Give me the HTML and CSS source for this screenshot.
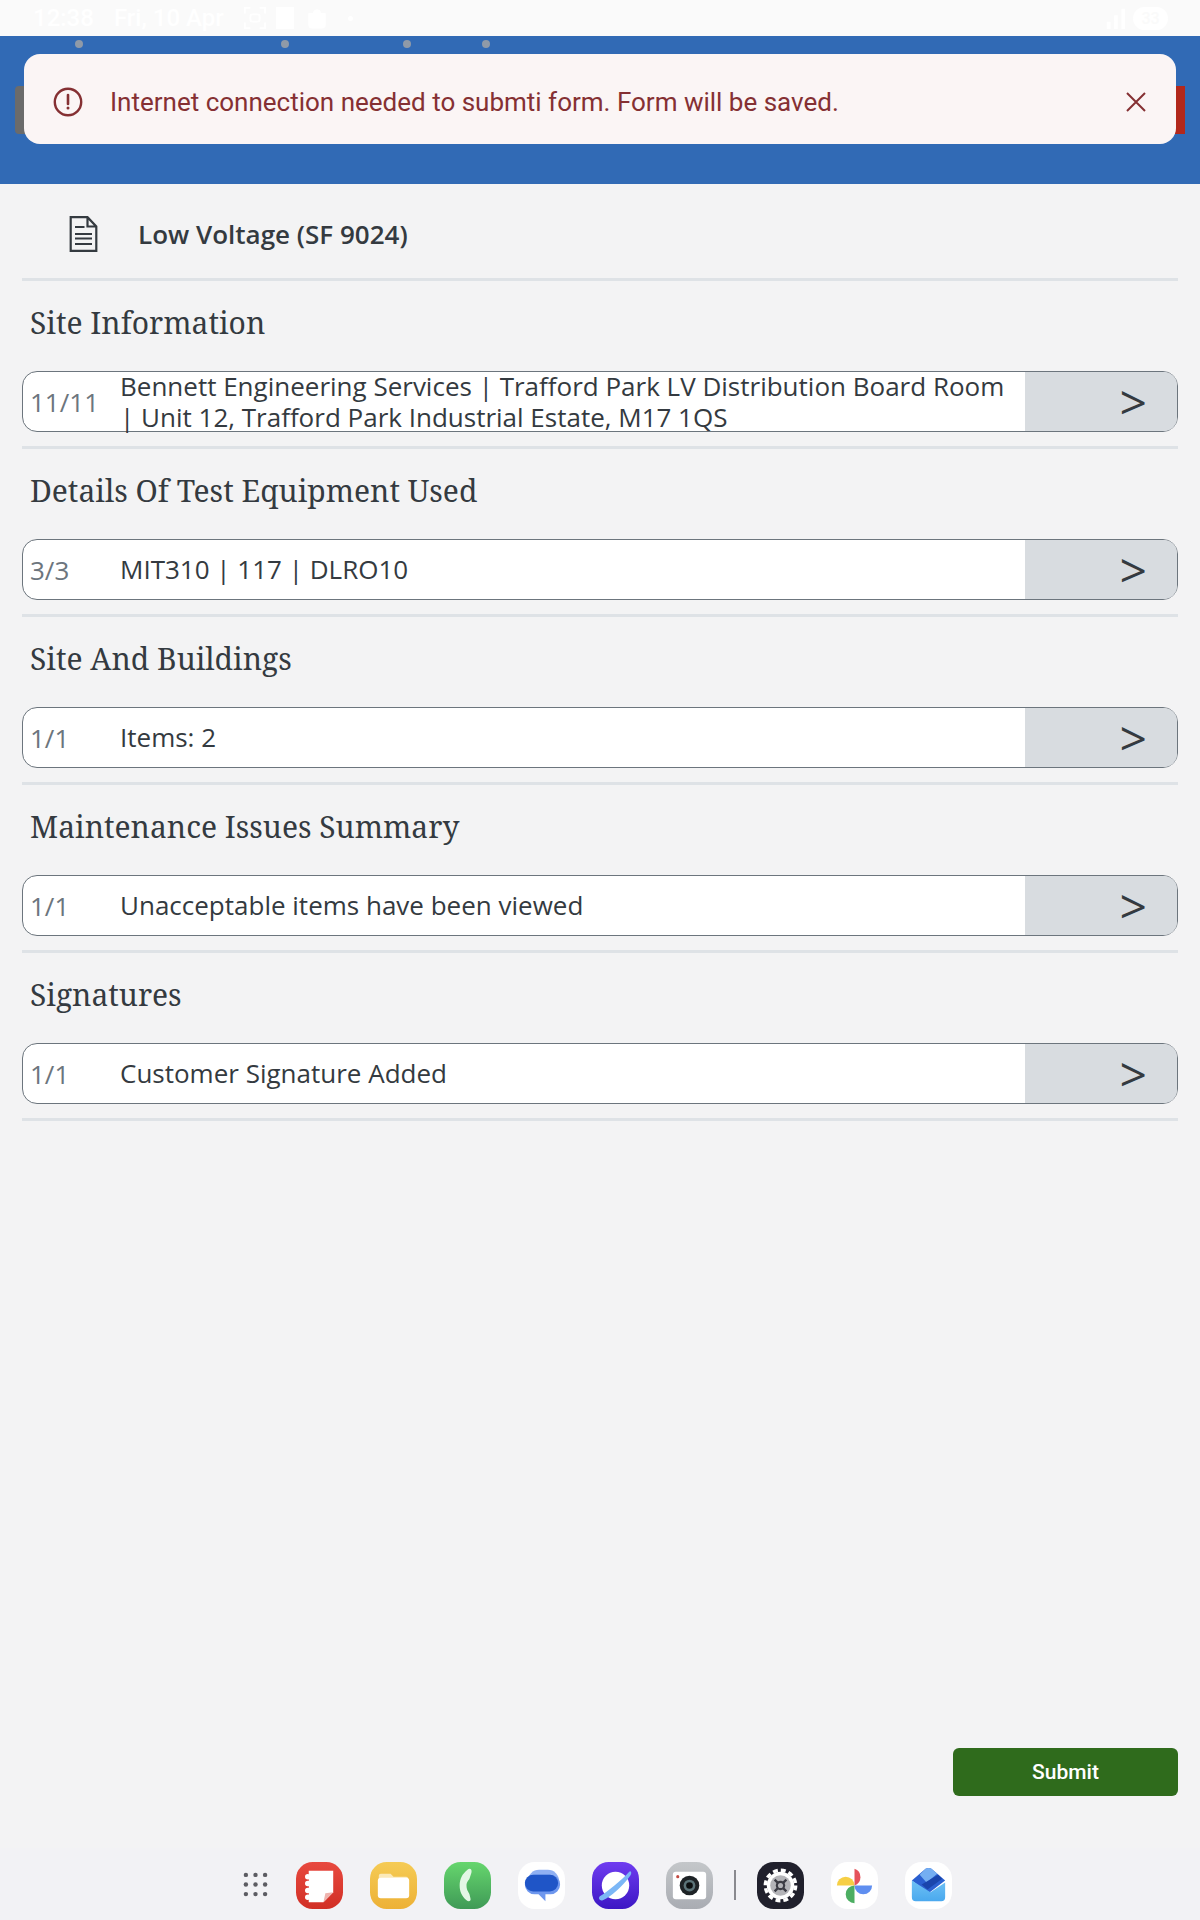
FILE: index.html
```html
<!DOCTYPE html>
<html lang="en">
<head>
<meta charset="utf-8">
<title>Low Voltage (SF 9024)</title>
<link rel="stylesheet" href="styles.css">
</head>
<body>
<div class="status">
  <span class="st-time">12:38</span><span class="st-date">Fri, 10 Apr</span>
  <svg class="st-ico" viewBox="0 0 24 24"><path d="M1 7V1H7M17 1H23V7M23 17V23H17M7 23H1V17" fill="none" stroke="#fff" stroke-width="2"/><rect x="7" y="8" width="10" height="8" rx="2" fill="none" stroke="#fff" stroke-width="2"/></svg>
  <span class="st-box"></span>
  <svg class="st-ico" viewBox="0 0 24 24"><path d="M3 7H21V20A3 3 0 0 1 18 23H6A3 3 0 0 1 3 20Z M8 7A4 4 0 0 1 16 7" fill="#fff" stroke="#fff"/></svg>
  <span class="st-dot"></span>
  <span class="st-spacer"></span>
  <svg class="st-signal" viewBox="0 0 24 24"><path d="M2 24V16H6V24ZM10 24V9H14V24ZM18 24V2H22V24Z" fill="#fff"/></svg>
  <span class="st-batt">33</span>
</div>
<header class="header">
  <span class="pin p1"></span><span class="pin p2"></span><span class="pin p3"></span><span class="pin p4"></span>
  <span class="side left"></span><span class="side right"></span>
  <div class="toast">
    <svg class="toast-ico" viewBox="0 0 30 30"><circle cx="15" cy="15" r="13.2" fill="none" stroke="#853033" stroke-width="2.4"/><path d="M15 8v9" stroke="#853033" stroke-width="2.6" stroke-linecap="round"/><circle cx="15" cy="21" r="1.5" fill="#853033"/></svg>
    <span class="toast-text">Internet connection needed to submti form. Form will be saved.</span>
    <svg class="toast-x" viewBox="0 0 20 20"><path d="M1 1l18 18M19 1L1 19" stroke="#853033" stroke-width="2" fill="none"/></svg>
  </div>
</header>
<main class="main">
  <div class="title">
    <svg class="doc" viewBox="0 0 28 36"><path d="M1.2 1.2H18L26.8 10.5V34.8H1.2Z M18 1.2V10.5H26.8" fill="none" stroke="#343a40" stroke-width="2.2"/><path d="M5.5 11H15M5.5 18H22.5M5.5 22.5H22.5M5.5 28H22.5" stroke="#343a40" stroke-width="2.2"/></svg>
    <span>Low Voltage (SF 9024)</span>
  </div>
  <section class="section">
    <h2>Site Information</h2>
    <div class="row"><span class="count">11/11</span><span class="val">Bennett Engineering Services | Trafford Park LV Distribution Board Room | Unit 12, Trafford Park Industrial Estate, M17 1QS</span><span class="go">&gt;</span></div>
  </section>
  <section class="section">
    <h2>Details Of Test Equipment Used</h2>
    <div class="row"><span class="count">3/3</span><span class="val">MIT310 | 117 | DLRO10</span><span class="go">&gt;</span></div>
  </section>
  <section class="section">
    <h2>Site And Buildings</h2>
    <div class="row"><span class="count">1/1</span><span class="val">Items: 2</span><span class="go">&gt;</span></div>
  </section>
  <section class="section">
    <h2>Maintenance Issues Summary</h2>
    <div class="row"><span class="count">1/1</span><span class="val">Unacceptable items have been viewed</span><span class="go">&gt;</span></div>
  </section>
  <section class="section">
    <h2>Signatures</h2>
    <div class="row"><span class="count">1/1</span><span class="val">Customer Signature Added</span><span class="go">&gt;</span></div>
  </section>
  <div class="actions"><button class="submit">Submit</button></div>
</main>
<nav class="dock">
  <svg class="grid" viewBox="0 0 26 26"><g fill="#5c5c62"><circle cx="3" cy="3" r="2.3"/><circle cx="13" cy="3" r="2.3"/><circle cx="23" cy="3" r="2.3"/><circle cx="3" cy="13" r="2.3"/><circle cx="13" cy="13" r="2.3"/><circle cx="23" cy="13" r="2.3"/><circle cx="3" cy="23" r="2.3"/><circle cx="13" cy="23" r="2.3"/><circle cx="23" cy="23" r="2.3"/></g></svg>
  <svg class="app" viewBox="0 0 48 48"><defs><linearGradient id="r" x1="0" y1="0" x2="0" y2="1"><stop offset="0" stop-color="#e8493f"/><stop offset="1" stop-color="#d12f25"/></linearGradient></defs><rect width="48" height="48" rx="17" fill="url(#r)"/><path d="M13 9H38V31L28 41H13Z" fill="#fff"/><path d="M28 41L30 32L38 31Z" fill="#eeb3ae"/><g fill="#fff"><circle cx="12" cy="15" r="2.8"/><circle cx="12" cy="22" r="2.8"/><circle cx="12" cy="29" r="2.8"/><circle cx="12" cy="36" r="2.8"/></g></svg>
  <svg class="app" viewBox="0 0 48 48"><defs><linearGradient id="y" x1="0" y1="0" x2="0" y2="1"><stop offset="0" stop-color="#f5cb55"/><stop offset="1" stop-color="#edb136"/></linearGradient></defs><rect width="48" height="48" rx="17" fill="url(#y)"/><path d="M9 14a2 2 0 0 1 2-2H21L24 15H37a2 2 0 0 1 2 2V20H9Z" fill="#fbe9b8"/><rect x="8" y="16" width="32" height="21" rx="3" fill="#fff"/></svg>
  <svg class="app" viewBox="0 0 48 48"><defs><linearGradient id="g" x1="0" y1="0" x2="0" y2="1"><stop offset="0" stop-color="#66d66e"/><stop offset="1" stop-color="#3f9a56"/></linearGradient></defs><rect width="48" height="48" rx="17" fill="url(#g)"/><path d="M24 8C26 6 29 7 28 11L26 17C25 19 23 20 23 24C23 29 25 30 26 33L27 37C28 40 25 41 23 39C18 35 16 30 16 24C16 17 19 12 24 8Z" fill="#e3f7e5"/></svg>
  <svg class="app" viewBox="0 0 48 48"><rect width="48" height="48" rx="17" fill="#fff"/><rect x="10" y="8" width="32" height="23" rx="11.5" fill="#8fb0f3"/><path d="M17 13H33A9 9 0 0 1 33 33H28V40L21 33H17A9 9 0 0 1 17 13Z" fill="#6e97ee"/><rect x="7" y="13" width="34" height="17" rx="8.5" fill="#1f55c7"/></svg>
  <svg class="app" viewBox="0 0 48 48"><defs><linearGradient id="p" x1="0" y1="0" x2="0" y2="1"><stop offset="0" stop-color="#6f3cf0"/><stop offset="1" stop-color="#3c17c4"/></linearGradient></defs><rect width="48" height="48" rx="17" fill="url(#p)"/><circle cx="24" cy="24" r="14" fill="#fff"/><path d="M8 35C15 31 30 19 38 10C40 8 41 12 39 14C32 24 19 36 11 39C8 40 6 37 8 35Z" fill="#7cb7f6"/></svg>
  <svg class="app" viewBox="0 0 48 48"><defs><linearGradient id="c" x1="0" y1="0" x2="0" y2="1"><stop offset="0" stop-color="#c4c7ca"/><stop offset="1" stop-color="#a9acb2"/></linearGradient></defs><rect width="48" height="48" rx="17" fill="url(#c)"/><rect x="7" y="10" width="34" height="28" rx="3" fill="#fff"/><circle cx="12" cy="15" r="1.6" fill="#c24a42"/><circle cx="24" cy="24" r="10" fill="#1e2326"/><circle cx="24" cy="24" r="6" fill="#5b7378"/><circle cx="24" cy="24" r="3.4" fill="#0c0f10"/></svg>
  <span class="sep"></span>
  <svg class="app" viewBox="0 0 48 48"><rect width="48" height="48" rx="17" fill="#20202c"/><circle cx="24" cy="24" r="14" fill="#fff"/><circle cx="24" cy="24" r="15.5" fill="none" stroke="#fff" stroke-width="3.5" stroke-dasharray="5 3.1"/><circle cx="24" cy="24" r="10.5" fill="#b4b4b8"/><g stroke="#3c3c44" stroke-width="2.4"><path d="M18 18L30 30M30 18L18 30"/></g><circle cx="24" cy="24" r="4.8" fill="#3c3c44"/><circle cx="24" cy="24" r="2.6" fill="#b4b4b8"/></svg>
  <svg class="app" viewBox="0 0 48 48"><rect width="48" height="48" rx="17" fill="#fff"/><path d="M24 24H6A9 9 0 0 1 24 24Z" fill="#f6cf45"/><path d="M24 24V7A9 9 0 0 1 24 24Z" fill="#e5525b"/><path d="M24 24H42A9 9 0 0 1 24 24Z" fill="#5f8ef0"/><path d="M24 24V42A9 9 0 0 1 24 24Z" fill="#4cae62"/></svg>
  <svg class="app" viewBox="0 0 48 48"><defs><linearGradient id="b" x1="0" y1="0" x2="0" y2="1"><stop offset="0" stop-color="#6fc1f5"/><stop offset="1" stop-color="#4aa9ee"/></linearGradient></defs><rect width="48" height="48" rx="17" fill="#fff"/><path d="M7 19L21 7Q24 5 27 7L41 19L24 32Z" fill="#2a5fd0"/><path d="M15 13L21 7Q24 5 27 7L33 12L22 21Z" fill="#74aef2"/><path d="M17 23L34 13L38 17L23 28Z" fill="#1a45ac"/><path d="M7 19L26 31L41 21V36A4 4 0 0 1 37 40H11A4 4 0 0 1 7 36Z" fill="url(#b)"/></svg>
</nav>
</body>
</html>
```

FILE: styles.css
```css
* { box-sizing: border-box; }
html, body { margin: 0; padding: 0; }
body { width: 1200px; height: 1920px; background: #f3f3f4; display: flex; flex-direction: column; font-family: "Open Sans", sans-serif; color: #343a40; overflow: hidden; }

.status { height: 36px; background: #fafafa; display: flex; align-items: center; padding: 0 32px 0 33px; color: #ffffff; font: 500 24px "Roboto", sans-serif; flex: none; }
.st-time { margin-right: 20px; }
.st-date { margin-right: 20px; }
.st-ico { width: 22px; height: 22px; margin-right: 10px; }
.st-box { width: 18px; height: 22px; background: #fff; margin-right: 12px; }
.st-dot { width: 5px; height: 5px; margin-left: 10px; background: #fff; border-radius: 50%; }
.st-spacer { flex: 1; }
.st-signal { width: 22px; height: 22px; margin-right: 6px; }
.st-batt { width: 35px; height: 23px; background: #fff; border-radius: 12px; color: #fafafa; font-size: 16px; line-height: 23px; text-align: center; }

.header { height: 148px; background: #316ab5; position: relative; padding: 18px 24px 0; flex: none; }
.pin { position: absolute; top: 4px; width: 8px; height: 8px; border-radius: 50%; background: #8f9aa8; }
.p1 { left: 75px; } .p2 { left: 281px; } .p3 { left: 403px; } .p4 { left: 482px; }
.side { position: absolute; top: 50px; height: 48px; width: 12px; }
.side.left { left: 15px; background: #6b6b6b; border-radius: 4px 0 0 4px; }
.side.right { left: 1173px; background: #b2281c; }
.toast { position: relative; height: 90px; background: #fbf5f5; border-radius: 16px; display: flex; align-items: center; padding: 5px 30px 0 29px; }
.toast-ico { width: 30px; height: 30px; flex: none; }
.toast-text { flex: 1; margin-left: 27px; font: 400 26px "Roboto", sans-serif; color: #853033; }
.toast-x { width: 20px; height: 20px; flex: none; }

.main { flex: 1; display: flex; flex-direction: column; padding: 0 22px; min-height: 0; }
.title { height: 97px; padding: 5px 0 0 47px; display: flex; align-items: center; gap: 40px; border-bottom: 3px solid #dee2e6; font-weight: 600; font-size: 26px; flex: none; }
.doc { width: 29px; height: 36px; flex: none; }
.section { height: 168px; border-bottom: 3px solid #dee2e6; flex: none; display: flex; flex-direction: column; }
.section h2 { margin: 0; height: 90px; padding: 20px 0 0 8px; font: 400 30px/44px "Noto Serif", "DejaVu Serif Condensed", serif; color: #343a40; }
.row { height: 61px; display: flex; align-items: center; background: #fff; border: 1.5px solid #6c757d; border-radius: 15px; font-size: 26px; }
.count { width: 97px; padding-left: 7px; color: #6c757d; flex: none; }
.val { flex: 1; line-height: 31px; color: #343a40; }
.go { width: 152px; align-self: stretch; background: #d8dce0; flex: none; display: flex; align-items: center; justify-content: flex-end; padding-right: 30px; font-size: 48px; font-weight: 400; border-radius: 0 13px 13px 0; }

.actions { margin-top: auto; display: flex; justify-content: flex-end; padding-bottom: 52px; }
.submit { width: 225px; height: 48px; border: 0; border-radius: 6px; background: #2f6b1c; color: #fff; font: 500 21px "Roboto", sans-serif; }

.dock { height: 72px; flex: none; background: #f2f2f5; display: flex; align-items: flex-start; padding: 14px 0 0 243px; }
.grid { width: 25px; height: 25px; margin-top: 10px; margin-right: 28px; flex: none; }
.app { width: 47px; height: 47px; margin-right: 27px; flex: none; }
.sep { width: 2px; height: 30px; background: #8a8a8f; margin: 8px 21px 0 -6px; }
```
